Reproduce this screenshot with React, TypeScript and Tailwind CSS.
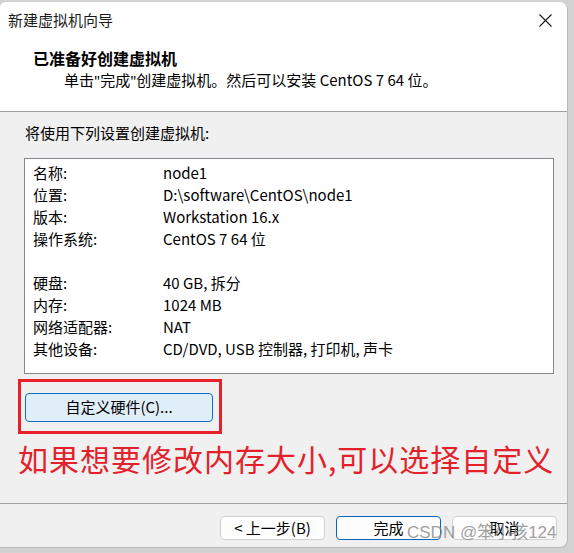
import React from "react";

const rows: [string, string][] = [
  ["名称:", "node1"],
  ["位置:", "D:\\software\\CentOS\\node1"],
  ["版本:", "Workstation 16.x"],
  ["操作系统:", "CentOS 7 64 位"],
  ["", ""],
  ["硬盘:", "40 GB, 拆分"],
  ["内存:", "1024 MB"],
  ["网络适配器:", "NAT"],
  ["其他设备:", "CD/DVD, USB 控制器, 打印机, 声卡"],
];

const font = { fontFamily: '"Noto Sans CJK SC", "Noto Sans", sans-serif' };

export default function App() {
  return (
    <div
      className="relative w-[574px] h-[553px] bg-[#d2d2d2] pt-[2px] overflow-hidden text-black"
      style={font}
    >
      <div className="w-[568px] h-[546px] bg-[#f0f0f0] rounded-tl-[6px] rounded-tr-[8px] rounded-br-[8px] border-r border-b border-[#b9b9b9] flex flex-col overflow-hidden">
        {/* header */}
        <div className="h-[110px] bg-white border-b border-[#a0a0a0] flex flex-col">
          <div className="h-[36px] flex items-center justify-between pl-[8px] pr-[15px]">
            <span className="text-[15px] text-[#1b1b1b]">新建虚拟机向导</span>
            <svg width="13" height="13" viewBox="0 0 13 13">
              <path d="M0.5 0.5 L12.5 12.5 M12.5 0.5 L0.5 12.5" stroke="#1b1b1b" strokeWidth="1.1" fill="none" />
            </svg>
          </div>
          <div className="mt-[9px] h-[22px] leading-[22px] pl-[33px] text-[16px] font-bold">
            已准备好创建虚拟机
          </div>
          <div className="h-[22px] leading-[22px] pl-[64px] text-[15px]">
            单击<span style={{ fontFamily: '"Noto Sans", sans-serif' }}>"</span>完成<span style={{ fontFamily: '"Noto Sans", sans-serif' }}>"</span>创建虚拟机。然后可以安装 CentOS 7 64 位。
          </div>
        </div>

        {/* body */}
        <div className="pt-[10px] pl-[25px] h-[22px] leading-[22px] text-[15px] box-content">
          将使用下列设置创建虚拟机:
        </div>
        <div className="mt-[14px] ml-[24px] w-[530px] h-[216px] bg-white border border-[#828790] pt-[3px] pl-[8px]">
          {rows.map(([k, v], i) => (
            <div key={i} className="h-[22px] flex items-center text-[15px]">
              <span className="w-[130px]">{k}</span>
              <span>{v}</span>
            </div>
          ))}
        </div>

        <div className="mt-[5px] ml-[18px] w-[204px] h-[55px] border-[3px] border-[#e8202a] pt-[11px] pl-[4px]">
          <div className="w-[188px] h-[29px] bg-[#e0eef9] border border-[#0a6fc8] rounded-[4px] flex items-center justify-center text-[15px]">
            自定义硬件(C)...
          </div>
        </div>

        <div className="mt-[4px] pl-[18px] h-[40px] leading-[40px] text-[30px] tracking-[1px] text-[#e3212b]">
          如果想要修改内存大小,可以选择自定义
        </div>

        {/* footer */}
        <div className="mt-auto h-[44px] border-t border-[#a0a0a0] flex justify-end gap-[11px] pt-[12px] pr-[10px]">
          <div className="w-[105px] h-[24px] bg-[#fdfdfd] border border-[#d0d0d0] rounded-[4px] flex items-center justify-center text-[15px]">
            &lt; 上一步(B)
          </div>
          <div className="w-[105px] h-[24px] bg-[#fdfdfd] border-[1.5px] border-[#0a64c0] rounded-[4px] flex items-center justify-center text-[15px]">
            完成
          </div>
          <div className="w-[105px] h-[24px] bg-[#fdfdfd] border border-[#d0d0d0] rounded-[4px] flex items-center justify-center text-[15px]">
            取消
          </div>
        </div>
      </div>

      {/* watermark */}
      <div
        className="absolute left-[407px] top-[522px] text-[17px] leading-[22px] text-[#8a8a8a] opacity-80 whitespace-nowrap"
        style={{ fontFamily: '"Liberation Sans", "Noto Sans CJK SC", sans-serif' }}
      >
        CSDN @笨小孩124
      </div>
    </div>
  );
}
